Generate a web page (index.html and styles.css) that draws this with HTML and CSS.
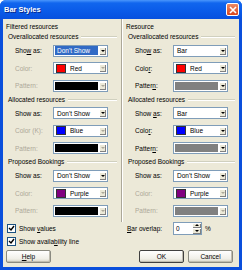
FILE: index.html
```html
<!DOCTYPE html>
<html lang="en">
<head>
    <meta charset="UTF-8">
    <title>Bar Styles</title>
    <link rel="stylesheet" href="styles.css">
</head>
<body>
    <div class="window">
        <div class="titlebar">
            <span class="title">Bar Styles</span>
            <span class="close">
                <svg width="8" height="8" viewBox="0 0 8 8"><path d="M1 1L7 7M7 1L1 7" stroke="#fff" stroke-width="1.6"/></svg>
            </span>
        </div>

        <div class="body">
            <div class="panels">
                <!-- filtered resources -->
                <div class="panel">
                    <div class="panel-title">Filtered resources</div>

                    <div class="group-head"><span>Overallocated resources</span></div>
                    <div class="row"><span class="label">Sho<u>w</u> as:</span><div class="combo"><span class="val sel">Don't Show</span><span class="drop"></span></div></div>
                    <div class="row"><span class="label off">Color:</span><div class="combo"><span class="swatch red"></span><span class="val">Red</span><span class="drop off"></span></div></div>
                    <div class="row"><span class="label off">Pattern:</span><div class="combo"><span class="fill black"></span><span class="drop off"></span></div></div>

                    <div class="group-head"><span>Allocated resources</span></div>
                    <div class="row"><span class="label">Show as:</span><div class="combo"><span class="val">Don't Show</span><span class="drop"></span></div></div>
                    <div class="row"><span class="label off">Color (K):</span><div class="combo"><span class="swatch blue"></span><span class="val">Blue</span><span class="drop off"></span></div></div>
                    <div class="row"><span class="label off">Pattern:</span><div class="combo"><span class="fill black"></span><span class="drop off"></span></div></div>

                    <div class="group-head"><span>Proposed Bookings</span></div>
                    <div class="row"><span class="label">Show as:</span><div class="combo"><span class="val">Don't Show</span><span class="drop"></span></div></div>
                    <div class="row"><span class="label off">Color:</span><div class="combo"><span class="swatch purple"></span><span class="val">Purple</span><span class="drop off"></span></div></div>
                    <div class="row"><span class="label off">Pattern:</span><div class="combo"><span class="fill black"></span><span class="drop off"></span></div></div>
                </div>

                <!-- resource -->
                <div class="panel panel-right">
                    <div class="panel-title">Resource</div>

                    <div class="group-head"><span>Overallocated resources</span></div>
                    <div class="row"><span class="label">Sho<u>w</u> as:</span><div class="combo"><span class="val">Bar</span><span class="drop"></span></div></div>
                    <div class="row"><span class="label">Colo<u>r</u>:</span><div class="combo"><span class="swatch red"></span><span class="val">Red</span><span class="drop"></span></div></div>
                    <div class="row"><span class="label">Patter<u>n</u>:</span><div class="combo"><span class="fill grey"></span><span class="drop"></span></div></div>

                    <div class="group-head"><span>Allocated resources</span></div>
                    <div class="row"><span class="label">Show <u>a</u>s:</span><div class="combo"><span class="val">Bar</span><span class="drop"></span></div></div>
                    <div class="row"><span class="label">Colo<u>r</u>:</span><div class="combo"><span class="swatch blue"></span><span class="val">Blue</span><span class="drop"></span></div></div>
                    <div class="row"><span class="label">Patter<u>n</u>:</span><div class="combo"><span class="fill grey"></span><span class="drop"></span></div></div>

                    <div class="group-head"><span>Proposed Bookings</span></div>
                    <div class="row"><span class="label">Show as:</span><div class="combo"><span class="val">Don't Show</span><span class="drop"></span></div></div>
                    <div class="row"><span class="label off">Color:</span><div class="combo"><span class="swatch purple"></span><span class="val">Purple</span><span class="drop off"></span></div></div>
                    <div class="row"><span class="label off">Pattern:</span><div class="combo"><span class="fill grey"></span><span class="drop off"></span></div></div>
                </div>
            </div>

            <div class="options">
                <div class="checks">
                    <div class="check"><span class="box"><svg width="7" height="7" viewBox="0 0 7 7"><path d="M1 3L3 5L6 1" fill="none" stroke="#000" stroke-width="1.4"/></svg></span><span>Show <u>v</u>alues</span></div>
                    <div class="check"><span class="box"><svg width="7" height="7" viewBox="0 0 7 7"><path d="M1 3L3 5L6 1" fill="none" stroke="#000" stroke-width="1.4"/></svg></span><span>Show availa<u>b</u>ility line</span></div>
                </div>
                <div class="overlap">
                    <span class="label"><u>B</u>ar overlap:</span>
                    <div class="spin"><span class="val">0</span><span class="arrows"><span class="up"></span><span class="down"></span></span></div>
                    <span class="pct">%</span>
                </div>
            </div>

            <div class="buttons">
                <button class="btn"><u>H</u>elp</button>
                <span class="spacer"></span>
                <button class="btn default">OK</button>
                <button class="btn">Cancel</button>
            </div>
        </div>
    </div>
</body>
</html>
```

FILE: styles.css
```css
body {
    margin: 0;
    font-family: "Liberation Sans", Arial, sans-serif;
    font-size: 6.5px;
    color: #000;
}
.window {
    width: 242px;
    height: 270px;
    background-color: #0a4fdc;
    border-radius: 6px 6px 0 0;
    display: flex;
    flex-direction: column;
    overflow: hidden;
}
.titlebar {
    height: 19px;
    display: flex;
    align-items: center;
    justify-content: space-between;
    padding: 0 3px 0 4px;
    background: linear-gradient(#4a96fc 0, #1166ee 3px, #0a5ae8 60%, #0750de 100%);
}
.title {
    color: #fff;
    font-weight: bold;
    font-size: 7.5px;
    text-shadow: 1px 1px 0 #0a2a8a;
}
.close {
    width: 11px;
    height: 11px;
    border: 1px solid #fff;
    border-radius: 2px;
    background: linear-gradient(#ec8a66, #d9461b);
    display: flex;
    align-items: center;
    justify-content: center;
}
.body {
    flex: 1;
    margin: 0 3px 3px;
    background-color: #ece9d8;
    display: flex;
    flex-direction: column;
}
.panels {
    display: grid;
    grid-template-columns: 118px 118px;
}
.panel {
    padding: 3px 4px 2px 3px;
}
.panel-right {
    border-left: 1px solid #aca899;
    box-shadow: inset 1px 0 #fff;
    padding-left: 4px;
}
.panel-title {
    height: 10px;
    line-height: 10px;
}
.group-head {
    height: 10px;
    line-height: 10px;
    padding-left: 2px;
    display: flex;
    align-items: center;
    gap: 3px;
}
.group-head::after {
    content: "";
    flex: 1;
    height: 1px;
    background-color: #d0d0bf;
    border-bottom: 1px solid #fff;
}
.row {
    height: 17.5px;
    display: flex;
    align-items: center;
    padding-left: 9px;
}
.label {
    width: 38px;
    white-space: nowrap;
}
.label.off {
    color: #aca899;
}
.combo {
    width: 55px;
    height: 12px;
    box-sizing: border-box;
    border: 1px solid #7f9db9;
    background-color: #fff;
    display: flex;
    align-items: center;
    padding: 1px;
}
.combo .val {
    flex: 1;
    padding-left: 2px;
    line-height: 9px;
    height: 9px;
    white-space: nowrap;
}
.combo .val.sel {
    background-color: #316ac5;
    color: #fff;
    margin-right: 1px;
}
.swatch {
    width: 8px;
    height: 7px;
    border: 1px solid #333;
    margin: 0 2px 0 1px;
}
.red { background-color: #ff0000; }
.blue { background-color: #0000ff; }
.purple { background-color: #800080; }
.fill {
    flex: 1;
    height: 8px;
    margin-right: 1px;
}
.black { background-color: #000; }
.grey { background-color: #808080; }
.drop {
    width: 7px;
    height: 8px;
    background-color: #ece9d8;
    box-shadow: inset 1px 1px #fff, inset -1px -1px #808080;
    display: flex;
    align-items: center;
    justify-content: center;
}
.drop::after {
    content: "";
    border-left: 2px solid transparent;
    border-right: 2px solid transparent;
    border-top: 2px solid #000;
}
.drop.off::after {
    border-top-color: #aca899;
}
.options {
    display: grid;
    grid-template-columns: 118px 118px;
}
.checks {
    padding-left: 4px;
}
.check {
    height: 13px;
    display: flex;
    align-items: center;
    gap: 3px;
}
.box {
    width: 7px;
    height: 7px;
    border: 1px solid #1c5180;
    background-color: #fff;
    display: flex;
}
.overlap {
    height: 13px;
    display: flex;
    align-items: center;
    padding-left: 6px;
}
.overlap .label {
    width: 46px;
}
.spin {
    width: 29px;
    height: 13px;
    box-sizing: border-box;
    border: 1px solid #7f9db9;
    background-color: #fff;
    display: flex;
}
.spin .val {
    flex: 1;
    padding-left: 2px;
    line-height: 11px;
}
.arrows {
    width: 9px;
    display: flex;
    flex-direction: column;
}
.arrows span {
    flex: 1;
    background-color: #ece9d8;
    box-shadow: inset 1px 1px #fff, inset -1px -1px #808080;
    display: flex;
    align-items: center;
    justify-content: center;
}
.up::after {
    content: "";
    border-left: 2px solid transparent;
    border-right: 2px solid transparent;
    border-bottom: 2px solid #000;
}
.down::after {
    content: "";
    border-left: 2px solid transparent;
    border-right: 2px solid transparent;
    border-top: 2px solid #000;
}
.pct {
    margin-left: 3px;
}
.buttons {
    display: flex;
    align-items: center;
    margin-top: 2.5px;
    padding: 0 6px 0 3px;
    gap: 4px;
}
.spacer {
    flex: 1;
}
.btn {
    width: 45px;
    height: 13px;
    padding: 0;
    font-family: inherit;
    font-size: 6.5px;
    color: #000;
    background: linear-gradient(#fff, #f0efe8 70%, #d8d5c8);
    border: 1px solid #8a8a80;
    border-radius: 2px;
    box-shadow: inset -1px -1px #c0bdb0;
}
.btn.default {
    border-color: #404040;
}
```
